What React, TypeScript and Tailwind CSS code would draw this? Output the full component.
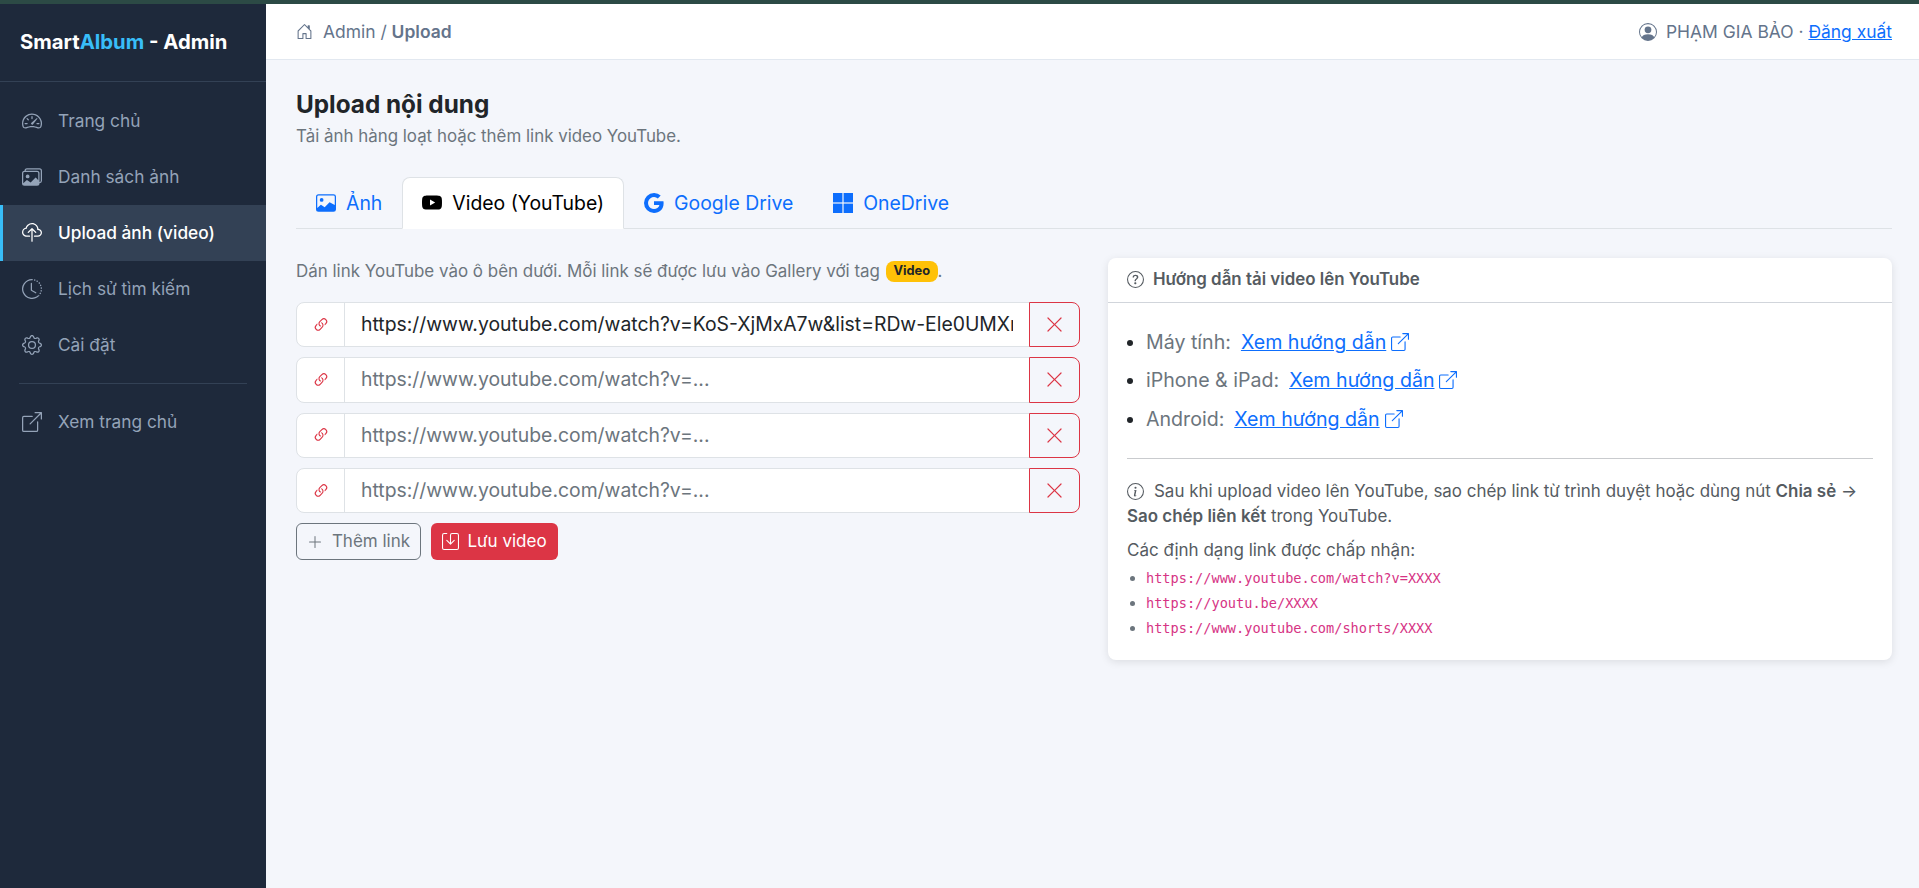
import React from "react";
import { BsSpeedometer2, BsImages, BsCloudUpload, BsClockHistory, BsGear, BsBoxArrowUpRight, BsHouseDoor, BsPersonCircle, BsImage, BsYoutube, BsGoogle, BsLink45Deg, BsXLg, BsPlusLg, BsSave, BsQuestionCircle, BsInfoCircle } from "react-icons/bs";

const navTop = [
  { icon: BsSpeedometer2, label: "Trang chủ" },
  { icon: BsImages, label: "Danh sách ảnh" },
  { icon: BsCloudUpload, label: "Upload ảnh (video)", active: true },
  { icon: BsClockHistory, label: "Lịch sử tìm kiếm" },
  { icon: BsGear, label: "Cài đặt" },
];

function WindowsPanes({ className }: { className?: string }) {
  return (
    <svg viewBox="0 0 20 20" fill="currentColor" className={className}>
      <rect x="0" y="0" width="9.4" height="9.4" />
      <rect x="10.6" y="0" width="9.4" height="9.4" />
      <rect x="0" y="10.6" width="9.4" height="9.4" />
      <rect x="10.6" y="10.6" width="9.4" height="9.4" />
    </svg>
  );
}

function NavItem({ icon: Icon, label, active }: { icon: React.ComponentType<{ className?: string }>; label: string; active?: boolean }) {
  return (
    <a className={`flex h-14 items-center gap-4 border-l-[3px] pl-[19px] text-[17.3px] ${active ? "border-[#38bdf8] bg-[#334155] font-medium text-white" : "border-transparent text-[#94a3b8]"}`}>
      <Icon className="h-5 w-5 shrink-0" />
      <span>{label}</span>
    </a>
  );
}

function Tab({ icon: Icon, label, active }: { icon: React.ComponentType<{ className?: string }>; label: string; active?: boolean }) {
  return (
    <div className={`-mb-px flex h-[52px] items-center gap-[10px] rounded-t-lg border px-[19px] text-[19.4px] ${active ? "border-[#dee2e6] border-b-white bg-white text-black" : "border-transparent text-[#0d6efd]"}`}>
      <Icon className="h-5 w-5 shrink-0" />
      <span>{label}</span>
    </div>
  );
}

function LinkRow({ value }: { value?: string }) {
  return (
    <div className="flex h-[45.33px] w-full">
      <div className="flex w-[49px] shrink-0 items-center justify-center rounded-l-lg border border-[#dee2e6] bg-white text-[#dc3545]">
        <BsLink45Deg className="h-[18px] w-[18px]" />
      </div>
      <input
        readOnly
        value={value ?? ""}
        placeholder="https://www.youtube.com/watch?v=..."
        className="-ml-px min-w-0 flex-1 border border-[#dee2e6] bg-white px-4 text-[19.36px] text-[#212529] outline-none placeholder:text-[#6c757d]"
      />
      <div className="-ml-px flex w-[51px] shrink-0 items-center justify-center rounded-r-lg border border-[#dc3545] text-[#dc3545]">
        <BsXLg className="h-[19px] w-[19px]" />
      </div>
    </div>
  );
}

function Guide({ label }: { label: string }) {
  return (
    <li className="h-[38.5px] leading-[28px]">
      <span className="text-[#6c757d]">{label}</span>
      <a className="ml-[10px] text-[#0d6efd] underline">
        Xem hướng dẫn
        <BsBoxArrowUpRight className="ml-[5px] inline h-[18px] w-[18px] align-[-2px]" />
      </a>
    </li>
  );
}

const codeCls = "font-['DejaVu_Sans_Mono',monospace] text-[13.6px] leading-none text-[#d63384]";

export default function App() {
  return (
    <div className="flex h-[888px] flex-col overflow-hidden bg-[#f4f6fb] font-['Inter',sans-serif] text-[17px] text-[#212529]">
      <div className="h-1 shrink-0 bg-[#2c4a45]" />
      <div className="flex min-h-0 flex-1">
        <aside className="w-[266px] shrink-0 bg-[#1e293b]">
          <div className="flex h-[78px] items-center border-b border-[#334155] pl-5 text-[20.3px] font-bold text-white">
            <span>Smart<span className="text-[#38bdf8]">Album</span> - Admin</span>
          </div>
          <nav className="pt-[11px]">
            {navTop.map((n) => (
              <NavItem key={n.label} {...n} />
            ))}
            <div className="mx-[19px] my-[10px] border-t border-[#334155]" />
            <NavItem icon={BsBoxArrowUpRight} label="Xem trang chủ" />
          </nav>
        </aside>
        <main className="min-w-0 flex-1">
          <header className="flex h-[56px] items-center justify-between border-b border-[#e2e8f0] bg-white pl-[30px] pr-[27px] pt-px text-[17.45px] text-[#64748b]">
            <div className="flex items-center gap-[10px]">
              <BsHouseDoor className="h-[17px] w-[17px]" />
              <span>Admin / <b className="font-semibold">Upload</b></span>
            </div>
            <div className="flex items-center gap-[9px]">
              <BsPersonCircle className="h-[18px] w-[18px]" />
              <span>PHẠM GIA BẢO · <a className="text-[#0d6efd] underline">Đăng xuất</a></span>
            </div>
          </header>
          <div className="pl-[30px] pr-[27px] pt-[27px]">
            <h1 className="text-[24.3px] font-bold leading-[34px] text-[#212529]">Upload nội dung</h1>
            <p className="mt-[3px] text-[16.9px] text-[#6c757d]">Tải ảnh hàng loạt hoặc thêm link video YouTube.</p>
            <div className="mt-[28px] flex border-b border-[#dee2e6]">
              <Tab icon={BsImage} label="Ảnh" />
              <Tab icon={BsYoutube} label="Video (YouTube)" active />
              <Tab icon={BsGoogle} label="Google Drive" />
              <Tab icon={WindowsPanes} label="OneDrive" />
            </div>
            <div className="mt-[29px] grid grid-cols-2 gap-7">
              <div className="pt-px">
                <p className="flex h-6 items-center text-[16.95px] text-[#6c757d]">
                  Dán link YouTube vào ô bên dưới. Mỗi link sẽ được lưu vào Gallery với tag
                  <span className="ml-[6px] rounded-lg bg-[#ffc107] px-[7.5px] py-[4px] text-[12.8px] font-bold leading-none text-[#212529]">Video</span>.
                </p>
                <div className="mt-[18.5px] flex flex-col gap-[10px]">
                  <LinkRow value="https://www.youtube.com/watch?v=KoS-XjMxA7w&list=RDw-Ele0UMXrY&start_radio=1" />
                  <LinkRow />
                  <LinkRow />
                  <LinkRow />
                </div>
                <div className="mt-[9.5px] flex gap-[10px]">
                  <button className="flex h-[37px] w-[125px] items-center justify-center gap-[9px] rounded-md border border-[#6c757d] pt-px text-[#6c757d]">
                    <BsPlusLg className="h-4 w-4" />
                    Thêm link
                  </button>
                  <button className="flex h-[37px] w-[127px] items-center justify-center gap-[8px] rounded-md bg-[#dc3545] pt-px text-white">
                    <BsSave className="h-[17px] w-[17px]" />
                    Lưu video
                  </button>
                </div>
              </div>
              <section className="h-[402px] rounded-lg bg-white shadow-[0_2px_8px_rgba(0,0,0,0.1)]">
                <div className="flex h-[45px] items-center gap-[9px] border-b border-[#d1d5db] px-[19px] pb-px text-[16.9px] font-semibold text-[#555b61]">
                  <BsQuestionCircle className="h-[17px] w-[17px]" />
                  Hướng dẫn tải video lên YouTube
                </div>
                <div className="px-[19px] pt-[24.5px]">
                  <ul className="list-disc pl-[19px] text-[19.6px]">
                    <Guide label="Máy tính:" />
                    <Guide label="iPhone &amp; iPad:" />
                    <Guide label="Android:" />
                  </ul>
                  <hr className="mt-[14.5px] border-[#c9cbce]" />
                  <p className="mt-[20px] text-[16.94px] leading-[25px] text-[#555b61]">
                    <BsInfoCircle className="mr-[10px] inline h-[17px] w-[17px] align-[-3px]" />
                    Sau khi upload video lên YouTube, sao chép link từ trình duyệt hoặc dùng nút <b className="font-semibold">Chia sẻ</b> → <b className="font-semibold">Sao chép liên kết</b> trong YouTube.
                  </p>
                  <p className="mt-[9px] text-[17px] leading-[25px] text-[#555b61]">Các định dạng link được chấp nhận:</p>
                  <ul className="mt-[2px] list-disc pl-[19px] text-[14px] leading-[25px] text-[#6c757d]">
                    <li><code className={codeCls}>https://www.youtube.com/watch?v=XXXX</code></li>
                    <li><code className={codeCls}>https://youtu.be/XXXX</code></li>
                    <li><code className={codeCls}>https://www.youtube.com/shorts/XXXX</code></li>
                  </ul>
                </div>
              </section>
            </div>
          </div>
        </main>
      </div>
    </div>
  );
}
